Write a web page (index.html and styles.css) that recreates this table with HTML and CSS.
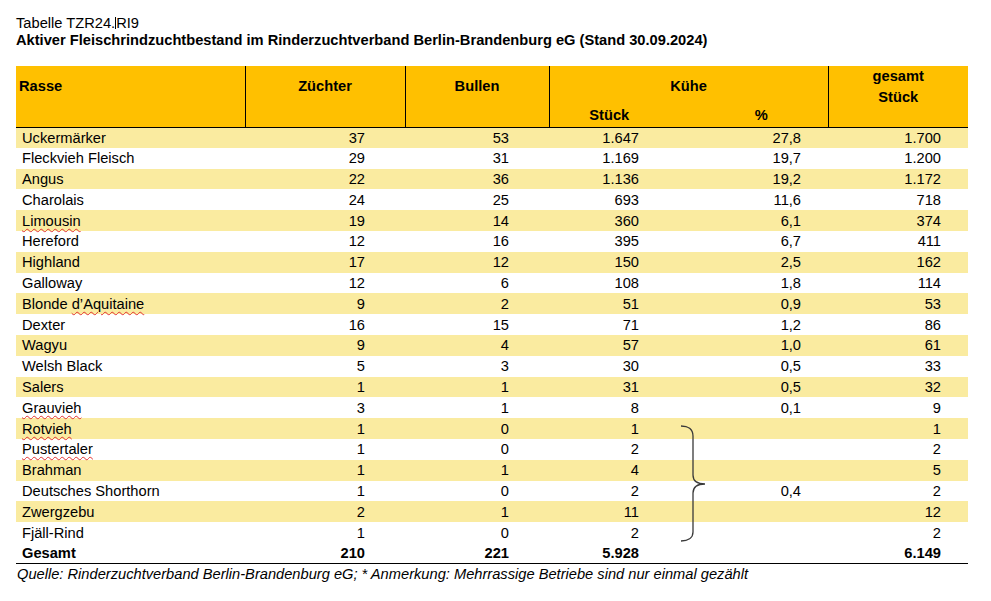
FILE: index.html
```html
<!DOCTYPE html>
<html lang="de">
<head>
<meta charset="utf-8">
<title>Tabelle TZR24.RI9</title>
<link rel="stylesheet" href="styles.css">
</head>
<body>
<div class="page">
  <div class="titles">
    <div class="t1">Tabelle TZR24.<span class="caret"></span>RI9</div>
    <div class="t2">Aktiver Fleischrindzuchtbestand im Rinderzuchtverband Berlin-Brandenburg eG (Stand 30.09.2024)</div>
  </div>
  <div class="tbl-wrap">
    <table class="tbl">
      <colgroup>
        <col class="w-rasse"><col class="w-z"><col class="w-b"><col class="w-st"><col class="w-pct"><col class="w-ges">
      </colgroup>
      <thead>
        <tr class="h1">
          <th rowspan="2" class="th-rasse">Rasse</th>
          <th rowspan="2" class="th-top">Züchter</th>
          <th rowspan="2" class="th-top">Bullen</th>
          <th colspan="2" class="th-top">Kühe</th>
          <th rowspan="2" class="th-ges">gesamt<br>Stück</th>
        </tr>
        <tr class="h2">
          <th class="th-st">Stück</th>
          <th class="th-pct">%</th>
        </tr>
      </thead>
      <tbody>
        <tr class="y"><td>Uckermärker</td><td>37</td><td>53</td><td>1.647</td><td>27,8</td><td>1.700</td></tr>
        <tr><td>Fleckvieh Fleisch</td><td>29</td><td>31</td><td>1.169</td><td>19,7</td><td>1.200</td></tr>
        <tr class="y"><td>Angus</td><td>22</td><td>36</td><td>1.136</td><td>19,2</td><td>1.172</td></tr>
        <tr><td>Charolais</td><td>24</td><td>25</td><td>693</td><td>11,6</td><td>718</td></tr>
        <tr class="y"><td><span class="sq">Limousin</span></td><td>19</td><td>14</td><td>360</td><td>6,1</td><td>374</td></tr>
        <tr><td>Hereford</td><td>12</td><td>16</td><td>395</td><td>6,7</td><td>411</td></tr>
        <tr class="y"><td>Highland</td><td>17</td><td>12</td><td>150</td><td>2,5</td><td>162</td></tr>
        <tr><td>Galloway</td><td>12</td><td>6</td><td>108</td><td>1,8</td><td>114</td></tr>
        <tr class="y"><td>Blonde <span class="sq">d’Aquitaine</span></td><td>9</td><td>2</td><td>51</td><td>0,9</td><td>53</td></tr>
        <tr><td>Dexter</td><td>16</td><td>15</td><td>71</td><td>1,2</td><td>86</td></tr>
        <tr class="y"><td>Wagyu</td><td>9</td><td>4</td><td>57</td><td>1,0</td><td>61</td></tr>
        <tr><td>Welsh Black</td><td>5</td><td>3</td><td>30</td><td>0,5</td><td>33</td></tr>
        <tr class="y"><td>Salers</td><td>1</td><td>1</td><td>31</td><td>0,5</td><td>32</td></tr>
        <tr><td><span class="sq">Grauvieh</span></td><td>3</td><td>1</td><td>8</td><td>0,1</td><td>9</td></tr>
        <tr class="y"><td><span class="sq">Rotvieh</span></td><td>1</td><td>0</td><td>1</td><td></td><td>1</td></tr>
        <tr><td><span class="sq">Pustertaler</span></td><td>1</td><td>0</td><td>2</td><td></td><td>2</td></tr>
        <tr class="y"><td>Brahman</td><td>1</td><td>1</td><td>4</td><td></td><td>5</td></tr>
        <tr><td>Deutsches Shorthorn</td><td>1</td><td>0</td><td>2</td><td>0,4</td><td>2</td></tr>
        <tr class="y"><td>Zwergzebu</td><td>2</td><td>1</td><td>11</td><td></td><td>12</td></tr>
        <tr><td>Fjäll-Rind</td><td>1</td><td>0</td><td>2</td><td></td><td>2</td></tr>
        <tr class="total"><td>Gesamt</td><td>210</td><td>221</td><td>5.928</td><td></td><td>6.149</td></tr>
      </tbody>
    </table>
    <svg class="brace" width="27" height="118" viewBox="0 0 27 118" aria-hidden="true">
      <path d="M1,1 C8,1 13,4 13,11 L13,50 C13,56 17,59 25,59 C17,59 13,62 13,68 L13,107 C13,113 8,116 1,116" fill="none" stroke="#3a3a3a" stroke-width="1.3"/>
    </svg>
  </div>
  <div class="source">Quelle: Rinderzuchtverband Berlin-Brandenburg eG; * Anmerkung: Mehrrassige Betriebe sind nur einmal gezählt</div>
</div>
</body>
</html>
```

FILE: styles.css
```css
html, body {
  margin: 0;
  padding: 0;
  background: #ffffff;
}

body {
  font-family: "Liberation Sans", Arial, sans-serif;
  color: #000000;
}

.page {
  padding-left: 16px;
  width: 952px;
}

.titles {
  padding-top: 15px;
  line-height: 17px;
}

.t1 {
  font-size: 14.67px;
}

.caret {
  display: inline-block;
  width: 0;
  height: 12px;
  border-left: 1px solid #000;
  vertical-align: -1px;
}

.t2 {
  font-size: 14.67px;
  font-weight: bold;
}

.tbl-wrap {
  position: relative;
  margin-top: 17px;
}

.tbl {
  border-collapse: collapse;
  table-layout: fixed;
  width: 952px;
  font-size: 14.67px;
}

.w-rasse { width: 229px; }
.w-z { width: 160px; }
.w-b { width: 144px; }
.w-st { width: 140px; }
.w-pct { width: 139px; }
.w-ges { width: 140px; }

.tbl th {
  background: #ffc000;
  font-weight: bold;
  line-height: 21px;
  padding: 0;
  text-align: center;
  vertical-align: top;
  border-left: 1px solid #000;
  border-bottom: 1px solid #000;
}

.tbl tr.h1 { height: 39px; }
.tbl tr.h2 { height: 22px; }

.tbl tr.h1 .th-top,
.tbl tr.h1 .th-rasse {
  padding-top: 10px;
}

.tbl tr.h1 .th-top[colspan] {
  border-bottom: none;
}

.tbl .th-rasse {
  border-left: none;
  text-align: left;
  padding-left: 3px;
}

.tbl .th-ges {
  padding-top: 0;
}

.tbl tr.h2 th {
  vertical-align: middle;
}

.tbl tr.h2 .th-pct {
  border-left: none;
  padding-left: 6px;
}

.tbl .th-st {
  padding-right: 20px;
}

.tbl tbody tr {
  height: 20.8px;
}

.tbl tbody tr.y {
  background: #faeba0;
}

.tbl td {
  padding: 0;
  line-height: 20px;
  vertical-align: middle;
  text-align: right;
  white-space: nowrap;
}

.tbl td:nth-child(1) {
  text-align: left;
  padding-left: 6px;
}

.tbl td:nth-child(2) { padding-right: 40px; }
.tbl td:nth-child(3) { padding-right: 40px; }
.tbl td:nth-child(4) { padding-right: 50px; }
.tbl td:nth-child(5) { padding-right: 27px; }
.tbl td:nth-child(6) { padding-right: 27px; }

.tbl tr.total {
  height: 20px;
  font-weight: bold;
}

.sq {
  text-decoration: underline wavy #e03030;
  text-decoration-thickness: 1px;
  text-underline-offset: 2px;
}

.brace {
  position: absolute;
  left: 664px;
  top: 359px;
}

.source {
  border-top: 1px solid #000;
  font-size: 14.67px;
  font-style: italic;
  line-height: 20px;
  padding-left: 1px;
}
```
